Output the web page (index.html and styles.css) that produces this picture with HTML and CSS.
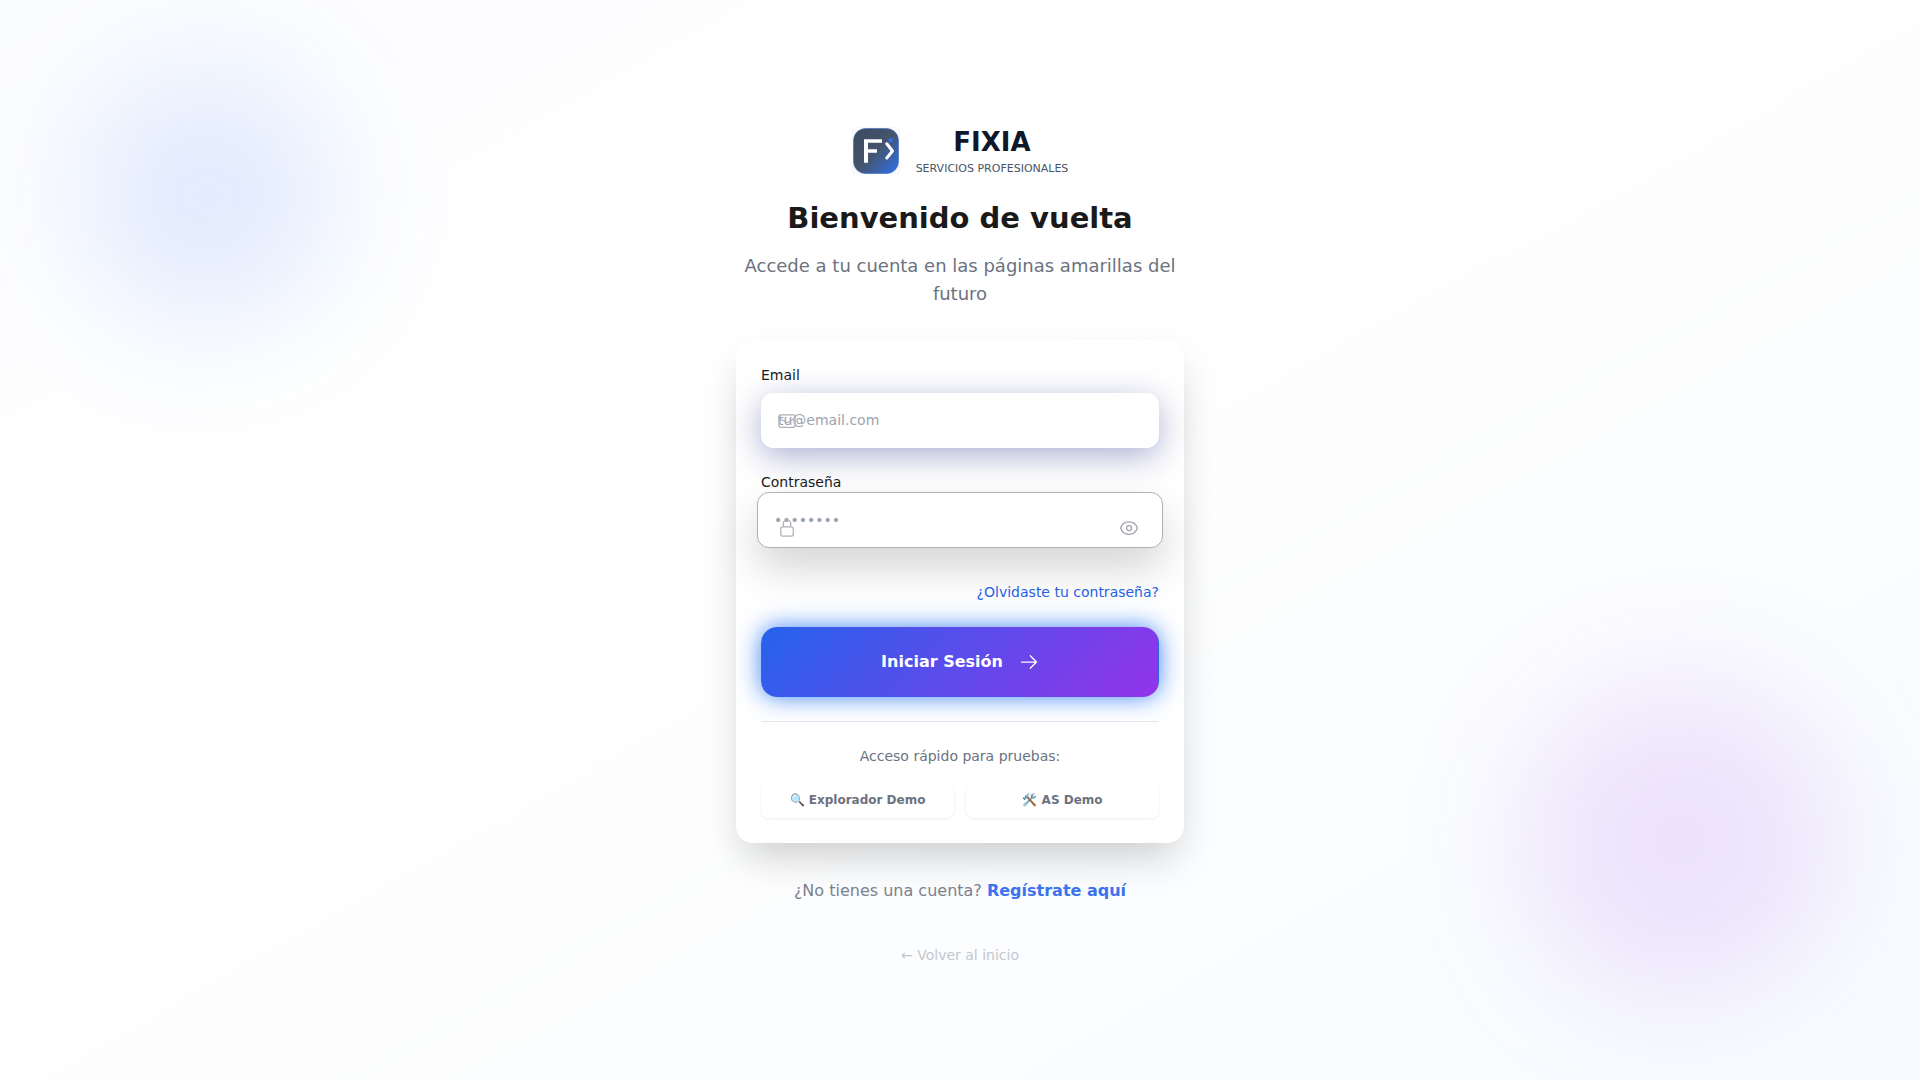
FILE: index.html
```html
<!DOCTYPE html>
<html lang="es">
<head>
<meta charset="utf-8">
<meta name="viewport" content="width=device-width, initial-scale=1">
<title>Fixia - Iniciar Sesión</title>
<link rel="stylesheet" href="styles.css">
</head>
<body class="page">
<div class="glow glow-blue"></div>
<div class="glow glow-purple"></div>
<main class="login">
  <header class="intro">
    <div class="brand">
      <svg class="brand-mark" viewBox="0 0 48 48" aria-hidden="true">
        <defs>
          <linearGradient id="mark" x1="0" y1="0" x2="1" y2="1">
            <stop offset="0" stop-color="#3a4a60"/>
            <stop offset="0.5" stop-color="#45546c"/>
            <stop offset="1" stop-color="#2f72ee"/>
          </linearGradient>
        </defs>
        <rect width="48" height="48" fill="#f9f9fb"/>
        <rect x="1.5" y="1.5" width="45" height="45" rx="12" fill="url(#mark)" stroke="#3b6cc4" stroke-opacity=".6"/>
        <path d="M12 12.300h18v3.400H16v6.600h9v3.400h-9v10h-4z" fill="#fff"/>
        <circle cx="38.700" cy="13.300" r="2.300" fill="#2f6fe8"/>
        <path d="M34.800 16.800 40.500 24l-5.700 7" fill="none" stroke="#fff" stroke-width="3" stroke-linecap="round" stroke-linejoin="round"/>
      </svg>
      <div class="brand-text">
        <span class="brand-name">FIXIA</span>
        <span class="brand-tag">SERVICIOS PROFESIONALES</span>
      </div>
    </div>
    <h1 class="title">Bienvenido de vuelta</h1>
    <p class="subtitle">Accede a tu cuenta en las páginas amarillas del futuro</p>
  </header>

  <section class="card">
    <form class="form">
      <div class="field">
        <label class="label" for="email">Email</label>
        <div class="control">
          <input class="input input-email" id="email" type="email" placeholder="tu@email.com">
          <svg class="icon icon-lead" viewBox="0 0 24 24" aria-hidden="true"><path d="M21.750 6.750v10.500a2.250 2.250 0 0 1-2.250 2.250h-15a2.250 2.250 0 0 1-2.250-2.250V6.750m19.500 0A2.250 2.250 0 0 0 19.500 4.500h-15a2.250 2.250 0 0 0-2.250 2.250m19.500 0v.243a2.250 2.250 0 0 1-1.070 1.916l-7.500 4.615a2.250 2.250 0 0 1-2.360 0L3.320 8.910a2.250 2.250 0 0 1-1.070-1.916V6.750"/></svg>
        </div>
      </div>
      <div class="field field-password">
        <label class="label" for="password">Contraseña</label>
        <div class="control">
          <input class="input input-password" id="password" type="password" placeholder="••••••••">
          <svg class="icon icon-lead icon-low" viewBox="0 0 24 24" aria-hidden="true"><path d="M16.500 10.500V6.750a4.500 4.500 0 1 0-9 0v3.750m-.750 11.250h10.500a2.250 2.250 0 0 0 2.250-2.250v-6.750a2.250 2.250 0 0 0-2.250-2.250H6.750a2.250 2.250 0 0 0-2.250 2.250v6.750a2.250 2.250 0 0 0 2.250 2.250Z"/></svg>
          <button class="reveal" type="button" aria-label="Mostrar contraseña">
            <svg class="icon" viewBox="0 0 24 24" aria-hidden="true"><path d="M2.036 12.322a1.012 1.012 0 0 1 0-.639C3.423 7.510 7.360 4.500 12 4.500c4.638 0 8.573 3.007 9.963 7.178.070.207.070.431 0 .639C20.577 16.490 16.640 19.500 12 19.500c-4.638 0-8.573-3.007-9.963-7.178Z"/><path d="M15 12a3 3 0 1 1-6 0 3 3 0 0 1 6 0Z"/></svg>
          </button>
        </div>
      </div>
      <a class="forgot" href="#">¿Olvidaste tu contraseña?</a>
      <button class="submit" type="submit">
        Iniciar Sesión
        <svg class="icon" viewBox="0 0 24 24" aria-hidden="true"><path d="M13.500 4.500 21 12m0 0-7.500 7.500M21 12H3"/></svg>
      </button>
    </form>
    <div class="quick">
      <p class="quick-title">Acceso rápido para pruebas:</p>
      <div class="quick-grid">
        <button class="demo" type="button">🔍 Explorador Demo</button>
        <button class="demo" type="button">🛠️ AS Demo</button>
      </div>
    </div>
  </section>

  <p class="signup">¿No tienes una cuenta? <a class="signup-link" href="#">Regístrate aquí</a></p>
  <a class="back" href="#">← Volver al inicio</a>
</main>
</body>
</html>
```
FILE: styles.css
```css
*, *::before, *::after { box-sizing: border-box; }

.page {
  position: relative;
  margin: 0;
  min-height: 100vh;
  display: flex;
  align-items: center;
  justify-content: center;
  overflow: hidden;
  font-family: "DejaVu Sans", sans-serif;
  font-size: 16px;
  line-height: 24px;
  color: #1a1a1a;
  background: linear-gradient(to bottom right, #fbfcff, #ffffff 30%, #fefefe 50%, #f7fbff);
}

.glow { position: absolute; border-radius: 50%; filter: blur(60px); }
.glow-blue { top: 68px; left: 80px; width: 256px; height: 256px; background: rgba(37, 99, 235, .12); }
.glow-purple { bottom: 80px; right: 80px; width: 320px; height: 320px; background: rgba(147, 51, 234, .12); }

.login {
  position: relative;
  width: 100%;
  max-width: 448px;
  padding-top: 8px;
  display: flex;
  flex-direction: column;
  align-items: center;
}

.intro { text-align: center; margin-bottom: 32px; }
.brand { display: flex; align-items: center; justify-content: center; gap: 16px; margin-bottom: 22px; }
.brand-mark { width: 48px; height: 48px; }
.brand-text { display: flex; flex-direction: column; }
.brand-name { font-size: 26px; line-height: 36px; font-weight: 700; color: #0f172a; }
.brand-tag { font-size: 11px; line-height: 18px; color: #475569; }
.title { margin: 0 0 16px; font-size: 29px; line-height: 36px; font-weight: 700; }
.subtitle { margin: 0; font-size: 18px; line-height: 28px; color: #6b7280; }

.card {
  width: 100%;
  padding: 24px;
  border: 1px solid #ffffff;
  border-radius: 16px;
  background: #ffffff;
  box-shadow: 0 20px 40px -8px rgba(0, 0, 0, .2);
}
.form { display: flex; flex-direction: column; }
.field { display: flex; flex-direction: column; gap: 8px; margin-bottom: 24px; }
.label { position: relative; z-index: 1; font-size: 14px; line-height: 20px; }
.control { position: relative; }
.input {
  display: block;
  width: 100%;
  height: 55px;
  padding: 16px;
  border: 1px solid #ffffff;
  border-radius: 12px;
  background: #ffffff;
  font: 14px/20px "DejaVu Sans", sans-serif;
  color: #1a1a1a;
}
.input::placeholder { color: #9ca3af; opacity: 1; }
.input-email { box-shadow: 0 8px 32px rgba(31, 38, 135, .37); }
.field-password { gap: 0; }
.field-password .control { margin: 0 -4px; }
.input-password { height: 56px; border-color: #b0b0b8; box-shadow: 0 20px 40px rgba(0, 0, 0, .17); }
.icon { display: block; width: 20px; height: 20px; fill: none; stroke: currentColor; stroke-width: 1.5; stroke-linecap: round; stroke-linejoin: round; }
.icon-lead { position: absolute; left: 16px; top: 18px; color: #b0b0b8; }
.icon-low { left: 20px; top: 26px; }
.reveal { position: absolute; right: 20px; top: 22px; padding: 4px; border: 0; background: none; color: #a1a1aa; }
.forgot { align-self: flex-end; margin: 10px 0 25px; font-size: 14px; line-height: 20px; color: #2563eb; text-decoration: none; }
.submit {
  display: flex;
  align-items: center;
  justify-content: center;
  gap: 16px;
  height: 70px;
  border: 1px solid transparent;
  border-radius: 16px;
  background: linear-gradient(135deg, #2563eb, #9333ea);
  box-shadow: 0 0 24px rgba(59, 130, 246, .96);
  font: 700 16px/24px "DejaVu Sans", sans-serif;
  color: #ffffff;
}

.quick { margin-top: 24px; padding-top: 24px; border-top: 1px solid #e5e7eb; text-align: center; }
.quick-title { margin: 0 0 16px; font-size: 14px; line-height: 20px; color: #6b7280; }
.quick-grid { display: grid; grid-template-columns: 1fr 1fr; gap: 12px; }
.demo {
  padding: 10px 8px;
  border: 0;
  border-radius: 8px;
  background: #ffffff;
  box-shadow: 0 1px 3px rgba(0, 0, 0, .08);
  font: 700 12px/16px "DejaVu Sans", sans-serif;
  color: #6b7280;
}

.signup { margin: 36px 0 0; color: #7b818d; }
.signup-link { font-weight: 700; color: #3b72ef; text-decoration: none; }
.back { margin-top: 42px; font-size: 14px; line-height: 20px; color: #c4c7ce; text-decoration: none; }
```
